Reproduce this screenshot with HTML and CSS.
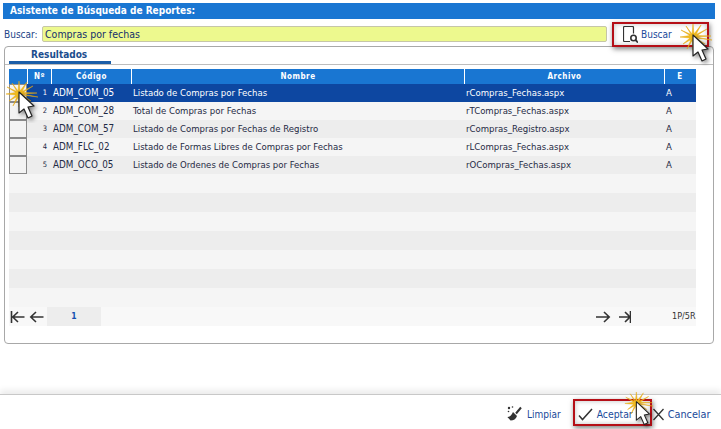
FILE: index.html
```html
<!DOCTYPE html>
<html lang="es">
<head>
<meta charset="utf-8">
<title>Asistente de Búsqueda de Reportes</title>
<link rel="stylesheet" href="styles.css">
</head>
<body>
<svg class="defs" width="0" height="0">
  <defs>
    <symbol id="clickcursor" viewBox="0 0 36 42">
      <path d="M33 12L19 11.500 29 5 18 10.500 23 1 16 10 15 0 14 10 8 2 13 10.500 3 6 12 11.500 2 13 12 14 5 20 13 15.500 9 25 14.500 16 15 26 16 16 21 24 17 15 27 20 18 14 34 16 18 13z" fill="#f2bd1d" stroke="#e3a512" stroke-width=".5"/>
      <path class="arrow" d="M15 11v21l5-4 4 9 4-2-4-9 6-1z" fill="#fff" stroke="#222" stroke-width="1.200" stroke-linejoin="round"/>
    </symbol>
  </defs>
</svg>
<main class="app">
  <header class="title">Asistente de Búsqueda de Reportes:</header>
  <div class="search">
    <label class="search-label" for="q">Buscar:</label>
    <input class="search-input" id="q" value="Compras por fechas">
    <button class="tool tool-search" type="button">
      <svg class="ico" width="15" height="17" viewBox="0 0 15 17"><path d="M7 15.500H1.500a1 1 0 0 1-1-1V1.500a1 1 0 0 1 1-1h8a1 1 0 0 1 1 1v6" fill="none" stroke="#333" stroke-width="1.200"/><circle cx="10.500" cy="12" r="2.700" fill="none" stroke="#333" stroke-width="1.600"/><path d="M12.500 14l2.500 2.500" stroke="#333" stroke-width="1.800"/></svg>
      Buscar
    </button>
  </div>
  <section class="panel">
    <div class="tabs"><span class="tab">Resultados</span></div>
    <div class="grid">
      <div class="row head">
        <span class="c chk"></span><span class="c num">Nº</span><span class="c code">Código</span><span class="c name">Nombre</span><span class="c file">Archivo</span><span class="c e">E</span>
      </div>
      <div class="row sel">
        <span class="c chk"><i class="box"></i></span><span class="c num">1</span><span class="c code">ADM_COM_05</span><span class="c name">Listado de Compras por Fechas</span><span class="c file">rCompras_Fechas.aspx</span><span class="c e">A</span>
      </div>
      <div class="row">
        <span class="c chk"><i class="box"></i></span><span class="c num">2</span><span class="c code">ADM_COM_28</span><span class="c name">Total de Compras por Fechas</span><span class="c file">rTCompras_Fechas.aspx</span><span class="c e">A</span>
      </div>
      <div class="row">
        <span class="c chk"><i class="box"></i></span><span class="c num">3</span><span class="c code">ADM_COM_57</span><span class="c name">Listado de Compras por Fechas de Registro</span><span class="c file">rCompras_Registro.aspx</span><span class="c e">A</span>
      </div>
      <div class="row">
        <span class="c chk"><i class="box"></i></span><span class="c num">4</span><span class="c code">ADM_FLC_02</span><span class="c name">Listado de Formas Libres de Compras por Fechas</span><span class="c file">rLCompras_Fechas.aspx</span><span class="c e">A</span>
      </div>
      <div class="row">
        <span class="c chk"><i class="box"></i></span><span class="c num">5</span><span class="c code">ADM_OCO_05</span><span class="c name">Listado de Ordenes de Compras por Fechas</span><span class="c file">rOCompras_Fechas.aspx</span><span class="c e">A</span>
      </div>
      <div class="row empty"></div><div class="row empty"></div><div class="row empty"></div><div class="row empty"></div><div class="row empty"></div><div class="row empty"></div><div class="row empty"></div>
      <div class="pager">
        <div class="nav">
          <svg width="38" height="16" viewBox="0 0 38 16"><g fill="none" stroke="#333" stroke-width="1.600"><path d="M2.500 2v12M15.500 8H3.500M9 3L3.800 8 9 13"/><path d="M34.500 8H22M27 3L21.800 8 27 13"/></g></svg>
        </div>
        <span class="page">1</span>
        <span class="spacer"></span>
        <div class="nav nav-right">
          <svg width="36" height="16" viewBox="0 0 36 16"><g fill="none" stroke="#333" stroke-width="1.600"><path d="M1 8h13M9 3l5.200 5L9 13"/><path d="M24 8h11M30 3l5 5-5 5"/><path d="M35.500 2v12"/></g></svg>
        </div>
        <span class="count">1P/5R</span>
      </div>
    </div>
  </section>
  <footer class="foot">
    <button class="tool" type="button">
      <svg width="16" height="16" viewBox="0 0 16 16"><path d="M6 6l4 4c-1 3-3.500 4.500-6.500 4.500C2.500 13 1 12 .5 11c2.500 0 4-2 5.500-5z" fill="#333"/><path d="M9 7.500l5-6" stroke="#333" stroke-width="2"/><g fill="#333"><circle cx="2" cy="2" r="1.200"/><circle cx="5.500" cy="1" r=".8"/><circle cx="1.500" cy="5.500" r=".8"/></g></svg>
      Limpiar
    </button>
    <button class="tool tool-ok" type="button">
      <svg width="15" height="13" viewBox="0 0 15 13"><path d="M1 7.500l3.500 4L14 1" fill="none" stroke="#333" stroke-width="1.500"/></svg>
      Aceptar
    </button>
    <button class="tool tool-cancel" type="button">
      <svg width="11" height="13" viewBox="0 0 11 13"><path d="M.5 1l10 11M10.500 1L.5 12" stroke="#333" stroke-width="1.300"/></svg>
      Cancelar
    </button>
  </footer>
  <div class="mark mark-search"></div>
  <div class="mark mark-ok"></div>
  <svg class="cursor cur-1" width="36" height="42"><use href="#clickcursor"/></svg>
  <svg class="cursor cur-2" width="36" height="42"><use href="#clickcursor"/></svg>
  <svg class="cursor cur-3" width="36" height="37"><use href="#clickcursor"/></svg>
</main>
</body>
</html>
```
FILE: styles.css
```css
* { box-sizing: border-box; }
html, body { margin: 0; padding: 0; background: #fff; }
body { font-family: "DejaVu Sans", sans-serif; font-stretch: condensed; font-size: 10px; color: #15428b; overflow: hidden; }
.defs { position: absolute; }
.app { position: relative; width: 721px; height: 429px; padding-top: 3px; display: flex; flex-direction: column; }

.title { margin: 0 6px 0 3px; height: 16px; background: #1976d2; color: #fff; font-weight: 700; font-size: 10px; line-height: 15px; padding-left: 7px; }

.search { display: flex; align-items: center; height: 24px; padding: 6px 0 0 4px; }
.search-label { width: 38px; color: #1c4587; font-size: 10px; }
.search-input { width: 565px; height: 16px; border: 1px solid #c6c6a8; border-radius: 2px; background: #edf98e; font: condensed 10.500px "DejaVu Sans", sans-serif; color: #15306b; padding: 0 2px; outline: 0; }

.tool { display: flex; align-items: center; gap: 3px; background: none; border: 0; padding: 0; font: condensed 10px "DejaVu Sans", sans-serif; color: #1a4a9a; }
.tool-search { margin-left: 16px; }

.panel { margin: 3px 0 0 4px; width: 710px; height: 298px; border: 1px solid #a8a8a8; border-radius: 4px; padding: 1px 4px 0 4px; }
.tabs { height: 17px; margin: 0 -4px; border-bottom: 1px solid #bdbdbd; padding-left: 4px; }
.tab { display: block; width: 102px; height: 16px; border-bottom: 3px solid #1b5ea8; font-weight: 700; font-size: 10px; line-height: 13px; color: #1b4d8e; padding-left: 22px; }

.grid { margin-top: 4px; width: 687px; }
.row { display: flex; height: 18px; background: #f5f5f5; line-height: 17px; color: #1f2a44; font-size: 9.500px; }
.row:nth-child(even) { background: #ededed; }
.row.empty { height: 19px; }
.row.head { height: 15px; line-height: 15px; background: #1976d2; color: #fff; font-weight: 700; font-size: 8px; letter-spacing: .5px; }
.row.sel { background: #0d47a1; color: #fff; }
.c { display: block; flex: none; padding-left: 2px; white-space: nowrap; overflow: hidden; }
.chk { width: 18px; padding: 0; }
.num { width: 24px; text-align: right; padding-right: 4px; font-size: 7.500px; }
.code { width: 80px; font-size: 9.800px; }
.name { width: 333px; padding-left: 2px; }
.file { width: 200px; padding-left: 2px; }
.e { width: 31px; padding-left: 2px; }
.head .c { font-size: 8px; text-align: center; border-left: 1px solid #fff; padding: 0; }
.head .chk { border-left: 0; }
.box { display: block; width: 18px; height: 18px; border: 1px solid #8a8a8a; background: #f3f3f3; }

.pager { display: flex; align-items: stretch; height: 19px; background: #f8f8f8; color: #333; font-size: 8.500px; }
.nav { display: flex; align-items: center; width: 38px; }
.page { width: 54px; background: #ededed; color: #1450b0; font-weight: 700; text-align: center; line-height: 19px; }
.spacer { flex: 1; }
.nav-right { width: 77px; }
.count { width: 24px; line-height: 19px; font-size: 9px; }

.foot { position: absolute; left: 0; right: 0; top: 394px; height: 35px; background: #fff; border-top: 1px solid #c8c8c8; box-shadow: 0 -4px 6px rgba(0,0,0,.08); display: flex; align-items: center; padding: 4px 0 0 507px; }
.foot .tool { gap: 4px; }
.tool-ok { margin-left: 17px; font-size: 10.300px; }
.tool-cancel { margin-left: 20px; font-size: 10.800px; }

.mark { position: absolute; border: 2px solid #b50f17; box-shadow: 1px 2px 5px rgba(0,0,0,.5), inset 0 0 5px rgba(0,0,0,.25); }
.mark-search { left: 612px; top: 22px; width: 97px; height: 25px; }
.mark-ok { left: 573px; top: 399px; width: 79px; height: 27px; }
.arrow { filter: drop-shadow(2px 2px 2px rgba(0,0,0,.45)); }
.cursor { position: absolute; }
.cur-1 { left: 4px; top: 81px; }
.cur-2 { left: 678px; top: 24px; }
.cur-3 { left: 621px; top: 392px; }
```
